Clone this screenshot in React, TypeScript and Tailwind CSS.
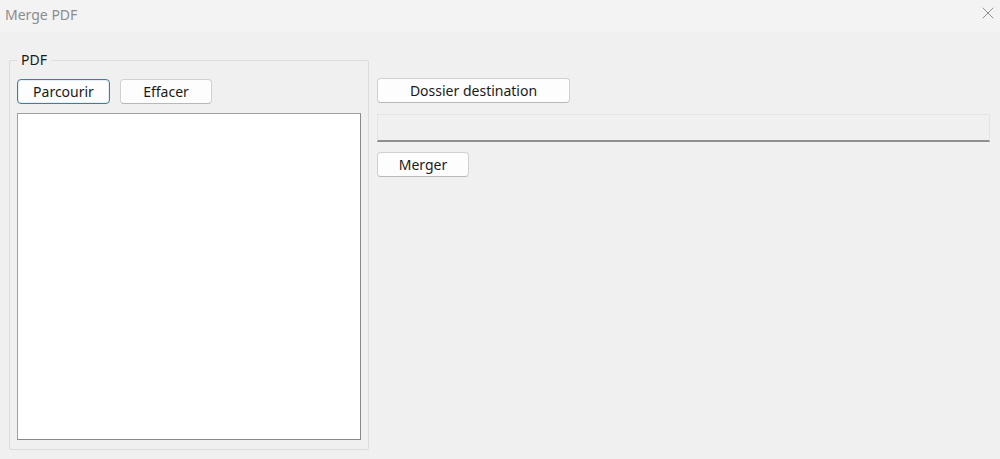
import { X } from "lucide-react";

function Btn({ label, focused = false, className = "" }: { label: string; focused?: boolean; className?: string }) {
  return (
    <button
      className={`h-[25px] rounded-[4px] bg-[#fdfdfd] text-[14px] text-[#1a1a1a] border ${
        focused ? "border-[#3f7f98] shadow-[inset_0_0_0_1px_#e6f0f4]" : "border-[#d0d0d0] border-b-[#b8b8b8]"
      } ${className}`}
    >
      {label}
    </button>
  );
}

export default function App() {
  return (
    <div className="w-[1000px] h-[459px] bg-[#f0f0f0] flex flex-col font-['Noto_Sans',sans-serif] overflow-hidden">
      {/* Title bar */}
      <div className="h-[32px] bg-[#f3f3f3] flex items-center justify-between pl-[5px] pr-[2px]">
        <span className="text-[14px] text-[#8c8c8c] mb-[4px]">Merge PDF</span>
        <X size={20} strokeWidth={1} className="text-[#7a7a7a] mb-[6px]" />
      </div>

      <div className="flex pl-[9px] pt-[28px] gap-[8px]">
        {/* PDF group */}
        <div className="relative w-[360px] h-[390px] border border-[#dcdcdc] rounded-[2px] pt-[18px] pl-[7px] pr-[8px]">
          <span className="absolute -top-[12px] left-[7px] px-[4px] bg-[#f0f0f0] text-[14px] text-[#1a1a1a]">PDF</span>
          <div className="flex gap-[10px]">
            <Btn label="Parcourir" focused className="w-[93px]" />
            <Btn label="Effacer" className="w-[92px]" />
          </div>
          <div className="mt-[9px] w-[344px] h-[327px] bg-white border border-[#a0a0a0] border-r-[#8a8a8a] border-b-[#8a8a8a]" />
        </div>

        {/* Right side */}
        <div className="flex-1 flex flex-col pt-[18px] pr-[10px]">
          <Btn label="Dossier destination" className="w-[193px]" />
          <div className="mt-[11px] h-[28px] bg-[#f0f0f0] border border-[#e4e4e4] border-b-[2px] border-b-[#8f8f8f]" />
          <Btn label="Merger" className="mt-[10px] w-[92px]" />
        </div>
      </div>
    </div>
  );
}
